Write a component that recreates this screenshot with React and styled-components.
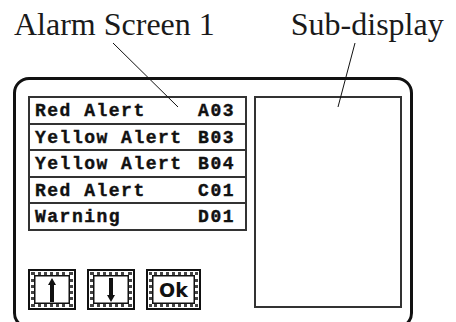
import styled, { createGlobalStyle } from "styled-components"

const GlobalStyle = createGlobalStyle`
    html, body {
        margin: 0;
        padding: 0;
        background: #fff;
    }
`

const alarms = [
    { name: "Red Alert", code: "A03" },
    { name: "Yellow Alert", code: "B03" },
    { name: "Yellow Alert", code: "B04" },
    { name: "Red Alert", code: "C01" },
    { name: "Warning", code: "D01" },
]

const Arrow = ({ down }) => (
    <svg width="10" height="24" viewBox="0 0 10 24" style={{ transform: down ? "rotate(180deg)" : "none" }}>
        <path d="M5 0 L9 7 L7 7 L7 24 L3 24 L3 7 L1 7 Z" fill="#111" />
    </svg>
)

const App = () => {
    return (
        <Page>
            <GlobalStyle />
            <Labels>
                <Label>Alarm Screen 1</Label>
                <Label>Sub-display</Label>
            </Labels>
            <Frame>
                <LeftColumn>
                    <AlarmList>
                        {alarms.map((el, i) => (
                            <AlarmRow key={i}>
                                <span>{el.name}</span>
                                <span>{el.code}</span>
                            </AlarmRow>
                        ))}
                    </AlarmList>
                    <ButtonBar>
                        <Key><KeyFace><Arrow /></KeyFace></Key>
                        <Key><KeyFace><Arrow down /></KeyFace></Key>
                        <Key $wide><KeyFace>Ok</KeyFace></Key>
                    </ButtonBar>
                </LeftColumn>
                <SubDisplay />
            </Frame>
            <Leaders width="456" height="322">
                <line x1="113" y1="43" x2="178" y2="107" stroke="#111" strokeWidth="1" />
                <line x1="355" y1="43" x2="338" y2="107" stroke="#111" strokeWidth="1" />
            </Leaders>
        </Page>
    )
}

export default App

const Page = styled.div`
    position: relative;
    width: 456px;
    height: 322px;
    overflow: hidden;
    background: #fff;
`

const Labels = styled.div`
    display: flex;
    padding: 8px 0 0 14px;
    gap: 76px;
    height: 69px;
    box-sizing: border-box;
`

const Label = styled.div`
    font-family: "Liberation Serif", "Times New Roman", serif;
    font-size: 32px;
    line-height: 32px;
    color: #1a1a1a;
`

const Frame = styled.div`
    margin: 8px 0 0 13px;
    width: 400px;
    height: 252px;
    box-sizing: border-box;
    border: 3px solid #111;
    border-radius: 16px;
    padding: 16px 8px 0 12px;
    display: flex;
    gap: 7px;
    align-items: flex-start;
`

const LeftColumn = styled.div`
    display: flex;
    flex-direction: column;
    width: 219px;
`

const AlarmList = styled.div`
    border: 2px solid #333;
    display: flex;
    flex-direction: column;
`

const AlarmRow = styled.div`
    box-sizing: border-box;
    height: 24.5px;
    display: flex;
    align-items: center;
    justify-content: space-between;
    padding: 2px 10px 0 5px;
    font-family: "Liberation Mono", "Courier New", monospace;
    font-weight: bold;
    font-size: 18px;
    line-height: 1;
    letter-spacing: 1.5px;
    -webkit-text-stroke: 0.4px #111;
    color: #111;
    & + & {
        height: 26.5px;
        border-top: 2px solid #333;
    }
`

const ButtonBar = styled.div`
    display: flex;
    gap: 11px;
    margin-top: 38px;
`

const Key = styled.div`
    width: ${props => props.$wide ? 55 : 48}px;
    height: 41px;
    box-sizing: border-box;
    border: 2px solid #111;
    padding: 1px;
    display: flex;
`

const KeyFace = styled.div`
    flex: 1;
    border: 3px dotted #444;
    box-shadow: inset 0 0 0 1.5px #111;
    display: flex;
    align-items: center;
    justify-content: center;
    font-family: "DejaVu Sans", sans-serif;
    font-weight: bold;
    font-size: 19px;
    color: #111;
    padding-top: 2px;
`

const SubDisplay = styled.div`
    width: 148px;
    height: 212px;
    box-sizing: border-box;
    border: 2px solid #333;
`

const Leaders = styled.svg`
    position: absolute;
    left: 0;
    top: 0;
    pointer-events: none;
`
